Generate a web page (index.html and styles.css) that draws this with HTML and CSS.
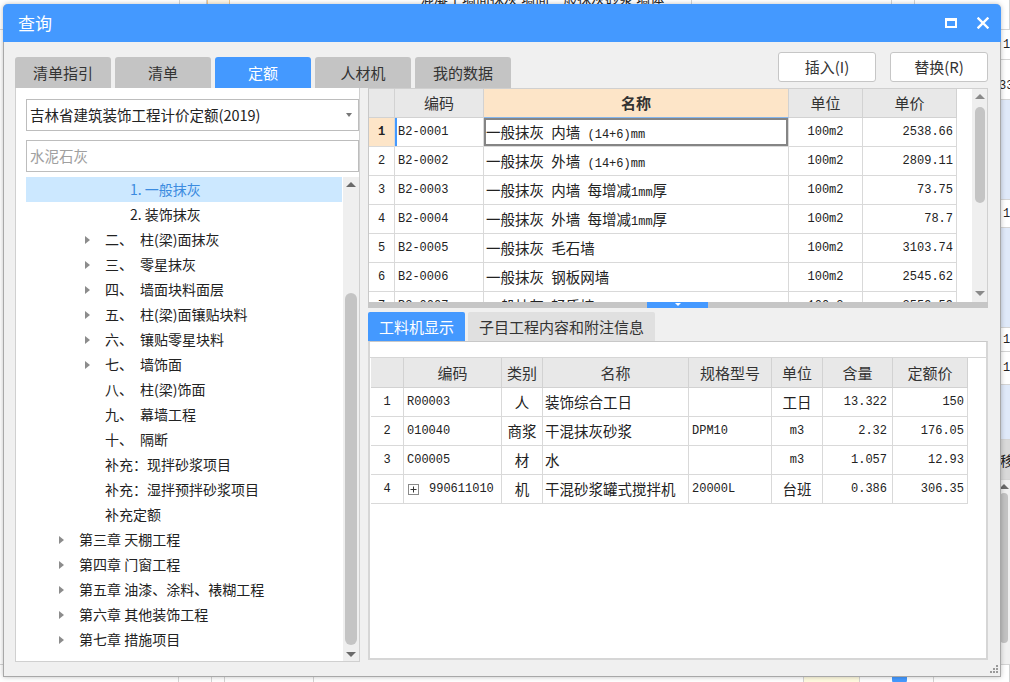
FILE: index.html
```html
<!DOCTYPE html>
<html lang="zh-CN">
<head>
<meta charset="utf-8">
<title>查询</title>
<link rel="stylesheet" href="styles.css">
</head>
<body>
<div class="app">
  <div class="app-top">
    <div class="ac"></div>
    <div class="ac"></div>
    <div class="ac ac-y"></div>
    <div class="ac"><span class="ac-txt">混凝土墙面抹灰 墙面一般抹灰砂浆 墙体</span></div>
    <div class="ac"></div>
    <div class="ac"></div>
    <div class="ac"></div>
  </div>
  <div class="app-mid"></div>
  <div class="app-right">
    <div class="ar ar-a">1</div>
    <div class="ar ar-b">33</div>
    <div class="ar ar-c ar-blue"></div>
    <div class="ar ar-d">1</div>
    <div class="ar ar-e ar-blue"></div>
    <div class="ar ar-f">1</div>
    <div class="ar ar-g">1</div>
    <div class="ar ar-h ar-blue"></div>
    <div class="ar ar-i">移</div>
    <div class="ar-sb"><span class="up-arrow dk"></span><span class="ar-thumb"></span></div>
  </div>
  <div class="app-bottom">
    <div class="ab"></div>
    <div class="ab"></div>
    <div class="ab"></div>
    <div class="ab"></div>
    <div class="ab"></div>
    <div class="ab ab-y"></div>
    <div class="ab"><span class="ab-blue"></span></div>
    <div class="ab"></div>
  </div>
</div>

<div class="dialog">
  <div class="titlebar">
    <span class="title">查询</span>
    <span class="ico-max"></span>
    <svg class="ico-close" width="12" height="12" viewBox="0 0 12 12"><path d="M1.5 1.5L10.5 10.5M10.5 1.5L1.5 10.5" stroke="#fff" stroke-width="2.4" stroke-linecap="square"/></svg>
  </div>

  <div class="toolbar">
    <div class="tabs">
      <div class="tab">清单指引</div>
      <div class="tab">清单</div>
      <div class="tab active">定额</div>
      <div class="tab">人材机</div>
      <div class="tab">我的数据</div>
    </div>
    <div class="actions">
      <div class="btn">插入(I)</div>
      <div class="btn">替换(R)</div>
    </div>
  </div>

  <div class="main">
    <div class="left">
      <div class="select"><span class="select-text">吉林省建筑装饰工程计价定额(2019)</span><span class="caret-down"></span></div>
      <div class="search">水泥石灰</div>
      <div class="tree">
        <div class="tree-list">
          <div class="node l3 sel">1. 一般抹灰</div>
          <div class="node l3">2. 装饰抹灰</div>
          <div class="node l2"><span class="tg"><i></i></span><span class="n">二、</span>柱(梁)面抹灰</div>
          <div class="node l2"><span class="tg"><i></i></span><span class="n">三、</span>零星抹灰</div>
          <div class="node l2"><span class="tg"><i></i></span><span class="n">四、</span>墙面块料面层</div>
          <div class="node l2"><span class="tg"><i></i></span><span class="n">五、</span>柱(梁)面镶贴块料</div>
          <div class="node l2"><span class="tg"><i></i></span><span class="n">六、</span>镶贴零星块料</div>
          <div class="node l2"><span class="tg"><i></i></span><span class="n">七、</span>墙饰面</div>
          <div class="node l2 leaf"><span class="n">八、</span>柱(梁)饰面</div>
          <div class="node l2 leaf"><span class="n">九、</span>幕墙工程</div>
          <div class="node l2 leaf"><span class="n">十、</span>隔断</div>
          <div class="node l2 leaf">补充：现拌砂浆项目</div>
          <div class="node l2 leaf">补充：湿拌预拌砂浆项目</div>
          <div class="node l2 leaf">补充定额</div>
          <div class="node l1"><span class="tg"><i></i></span>第三章 天棚工程</div>
          <div class="node l1"><span class="tg"><i></i></span>第四章 门窗工程</div>
          <div class="node l1"><span class="tg"><i></i></span>第五章 油漆、涂料、裱糊工程</div>
          <div class="node l1"><span class="tg"><i></i></span>第六章 其他装饰工程</div>
          <div class="node l1"><span class="tg"><i></i></span>第七章 措施项目</div>
        </div>
        <div class="vsb tree-sb">
          <div class="sb-btn"><span class="up-arrow dk"></span></div>
          <div class="sb-track"><span class="thumb tree-thumb"></span></div>
          <div class="sb-btn"><span class="down-arrow dk"></span></div>
        </div>
      </div>
    </div>

    <div class="right">
      <div class="upper">
        <div class="grid g1">
          <div class="row hd">
            <div class="cell"></div>
            <div class="cell">编码</div>
            <div class="cell hsel">名称</div>
            <div class="cell">单位</div>
            <div class="cell">单价</div>
          </div>
          <div class="row">
            <div class="cell c rn1">1</div>
            <div class="cell l focus">B2-0001</div>
            <div class="cell cj edit">一般抹灰&ensp;内墙&ensp;<span class="a">(14+6)mm</span></div>
            <div class="cell c">100m2</div>
            <div class="cell r">2538.66</div>
          </div>
          <div class="row">
            <div class="cell c">2</div>
            <div class="cell l">B2-0002</div>
            <div class="cell cj">一般抹灰&ensp;外墙&ensp;<span class="a">(14+6)mm</span></div>
            <div class="cell c">100m2</div>
            <div class="cell r">2809.11</div>
          </div>
          <div class="row">
            <div class="cell c">3</div>
            <div class="cell l">B2-0003</div>
            <div class="cell cj">一般抹灰&ensp;内墙&ensp;每增减<span class="a">1mm</span>厚</div>
            <div class="cell c">100m2</div>
            <div class="cell r">73.75</div>
          </div>
          <div class="row">
            <div class="cell c">4</div>
            <div class="cell l">B2-0004</div>
            <div class="cell cj">一般抹灰&ensp;外墙&ensp;每增减<span class="a">1mm</span>厚</div>
            <div class="cell c">100m2</div>
            <div class="cell r">78.7</div>
          </div>
          <div class="row">
            <div class="cell c">5</div>
            <div class="cell l">B2-0005</div>
            <div class="cell cj">一般抹灰&ensp;毛石墙</div>
            <div class="cell c">100m2</div>
            <div class="cell r">3103.74</div>
          </div>
          <div class="row">
            <div class="cell c">6</div>
            <div class="cell l">B2-0006</div>
            <div class="cell cj">一般抹灰&ensp;钢板网墙</div>
            <div class="cell c">100m2</div>
            <div class="cell r">2545.62</div>
          </div>
          <div class="row">
            <div class="cell c">7</div>
            <div class="cell l">B2-0007</div>
            <div class="cell cj">一般抹灰&ensp;轻质墙</div>
            <div class="cell c">100m2</div>
            <div class="cell r">2559.59</div>
          </div>
        </div>
        <div class="filler"></div>
        <div class="vsb up-sb">
          <div class="sb-btn"><span class="up-arrow"></span></div>
          <span class="thumb up-thumb"></span>
          <div class="sb-btn sb-end"><span class="down-arrow"></span></div>
        </div>
      </div>

      <div class="splitter"><span class="split-handle"><span class="split-tri"></span></span></div>

      <div class="ltabs">
        <div class="ltab active">工料机显示</div>
        <div class="ltab wide">子目工程内容和附注信息</div>
      </div>

      <div class="lower">
        <div class="strip"></div>
        <div class="grid g2">
          <div class="row hd">
            <div class="cell"></div>
            <div class="cell">编码</div>
            <div class="cell">类别</div>
            <div class="cell">名称</div>
            <div class="cell">规格型号</div>
            <div class="cell">单位</div>
            <div class="cell">含量</div>
            <div class="cell">定额价</div>
          </div>
          <div class="row">
            <div class="cell c">1</div>
            <div class="cell l">R00003</div>
            <div class="cell cj c">人</div>
            <div class="cell cj l2p">装饰综合工日</div>
            <div class="cell l"></div>
            <div class="cell cj c">工日</div>
            <div class="cell r r5">13.322</div>
            <div class="cell r">150</div>
          </div>
          <div class="row">
            <div class="cell c">2</div>
            <div class="cell l">010040</div>
            <div class="cell cj c">商浆</div>
            <div class="cell cj l2p">干混抹灰砂浆</div>
            <div class="cell l">DPM10</div>
            <div class="cell c">m3</div>
            <div class="cell r r5">2.32</div>
            <div class="cell r">176.05</div>
          </div>
          <div class="row">
            <div class="cell c">3</div>
            <div class="cell l">C00005</div>
            <div class="cell cj c">材</div>
            <div class="cell cj l2p">水</div>
            <div class="cell l"></div>
            <div class="cell c">m3</div>
            <div class="cell r r5">1.057</div>
            <div class="cell r">12.93</div>
          </div>
          <div class="row">
            <div class="cell c">4</div>
            <div class="cell l code-exp"><svg class="plus" width="11" height="11" viewBox="0 0 11 11"><rect x="0.5" y="0.5" width="10" height="10" fill="#fff" stroke="#8a8a8a"/><path d="M2.5 5.5h6M5.5 2.5v6" stroke="#333" stroke-width="1"/></svg>990611010</div>
            <div class="cell cj c">机</div>
            <div class="cell cj l2p">干混砂浆罐式搅拌机</div>
            <div class="cell l">20000L</div>
            <div class="cell cj c">台班</div>
            <div class="cell r r5">0.386</div>
            <div class="cell r">306.35</div>
          </div>
        </div>
      </div>
    </div>
  </div>

  <div class="footer">
    <svg class="grip" width="8" height="8" viewBox="0 0 8 8" fill="#9a9a9a"><rect x="6" y="0" width="2" height="2"/><rect x="3" y="3" width="2" height="2"/><rect x="6" y="3" width="2" height="2"/><rect x="0" y="6" width="2" height="2"/><rect x="3" y="6" width="2" height="2"/><rect x="6" y="6" width="2" height="2"/></svg>
  </div>
</div>
</body>
</html>
```

FILE: styles.css
```css
* { box-sizing: border-box; margin: 0; padding: 0; }

body {
  width: 1010px;
  height: 682px;
  overflow: hidden;
  position: relative;
  background: #fff;
  font-family: "Noto Sans CJK SC", "Noto Sans", sans-serif;
  font-size: 14px;
  color: #333;
}

/* ---------- background application ---------- */
.app {
  width: 1010px;
  height: 682px;
  display: grid;
  grid-template-columns: 1fr 14px;
  grid-template-rows: 30px 1fr 18px;
}
.app-top {
  grid-column: 1 / -1;
  display: grid;
  grid-template-columns: 180px 27px 23px 462px 200px 23px 1fr;
  border-bottom: 1px solid #d4d4d4;
}
.ac { border-right: 1px solid #d4d4d4; overflow: hidden; }
.ac-y { background: #fff7e6; border-left: 1px solid #f0c890; border-right-color: #f0c890; }
.ac-txt {
  display: block;
  margin-top: -10px;
  padding-left: 190px;
  line-height: 16px;
  font-size: 14px;
  color: #222;
  white-space: nowrap;
}
.app-mid { grid-column: 1; grid-row: 2; }
.app-right {
  grid-column: 2;
  grid-row: 2;
  display: flex;
  flex-direction: column;
  border-left: 1px solid #d4d4d4;
  font-family: "Liberation Mono", monospace;
  font-size: 12px;
  color: #222;
}
.ar { padding-left: 6px; border-bottom: 1px solid #d4d4d4; display: flex; align-items: center; white-space: nowrap; overflow: hidden; }
.ar-a { height: 30px; }
.ar-b { height: 40px; align-items: flex-end; padding-bottom: 6px; padding-left: 2px; }
.ar-c { height: 100px; }
.ar-d { height: 28px; }
.ar-e { height: 100px; }
.ar-f { height: 24px; }
.ar-g { height: 33px; }
.ar-h { height: 55px; }
.ar-i { height: 40px; background: #d9d9d9; font-family: "Noto Sans CJK SC", sans-serif; font-size: 14px; padding-left: 3px; }
.ar-blue { background: #dfe9f9; }
.ar-sb {
  flex: 1;
  background: #f0f0f0;
  display: flex;
  flex-direction: column;
  align-items: center;
  padding-top: 4px;
  gap: 4px;
}
.ar-thumb { width: 8px; height: 150px; border-radius: 4px; background: #c2c2c2; }
.app-bottom {
  grid-column: 1 / -1;
  grid-row: 3;
  display: grid;
  grid-template-columns: 179px 13px 26px 96px 490px 56px 74px 1fr;
  border-top: 1px solid #d4d4d4;
}
.ab { border-right: 1px solid #d4d4d4; padding-left: 32px; }
.ab-y { background: #fffbe0; }
.ab-blue { display: block; width: 15px; height: 18px; background: #4499ff; border-radius: 3px; }

/* ---------- dialog window ---------- */
.dialog {
  position: absolute;
  left: 3px;
  top: 4px;
  width: 998px;
  height: 673px;
  background: #f0f0f0;
  border: 1px solid #a8a8a8;
  border-top: 0;
  border-radius: 5px 5px 0 0;
  box-shadow: 0 0 5px rgba(0, 0, 0, 0.25);
  display: flex;
  flex-direction: column;
}

.titlebar {
  height: 38px;
  margin: 0 -1px;
  background: #4499ff;
  border-radius: 5px 5px 0 0;
  display: flex;
  align-items: center;
  padding: 0 12px 0 15px;
  color: #fff;
}
.title { flex: 1; font-size: 17px; line-height: 22px; }
.ico-max {
  width: 12px;
  height: 10px;
  border: 2px solid #fff;
  border-top-width: 3px;
  margin-right: 20px;
}
.ico-close { display: block; }

.toolbar {
  height: 36px;
  margin-top: 10px;
  display: flex;
  padding: 0 12px 0 11px;
}
.tabs { display: flex; gap: 4px; align-self: flex-end; }
.tab {
  width: 96px;
  height: 31px;
  line-height: 31px;
  text-align: center;
  font-size: 15px;
  background: #c4c4c4;
  border-radius: 3px 3px 0 0;
  color: #333;
}
.tab.active { background: #4499ff; color: #fff; }
.actions { margin-left: auto; display: flex; gap: 14px; align-self: flex-start; }
.btn {
  width: 98px;
  height: 30px;
  line-height: 28px;
  text-align: center;
  font-size: 15px;
  background: #fff;
  border: 1px solid #c6c6c6;
  border-radius: 3px;
  color: #333;
}

.main {
  height: 574px;
  display: flex;
  gap: 8px;
  padding: 0 12px 0 11px;
}

/* ---------- left panel ---------- */
.left {
  width: 345px;
  background: #fff;
  border: 1px solid #d0d0d0;
  border-top: 0;
  padding: 11px 0 0 10px;
  display: flex;
  flex-direction: column;
}
.select {
  height: 32px;
  border: 1px solid #bdbdbd;
  display: flex;
  align-items: center;
  padding: 0 6px 0 3px;
}
.select-text { flex: 1; font-size: 14.5px; line-height: 20px; color: #222; }
.caret-down {
  width: 0; height: 0;
  border-left: 3.5px solid transparent;
  border-right: 3.5px solid transparent;
  border-top: 4px solid #777;
}
.search {
  height: 32px;
  margin-top: 9px;
  border: 1px solid #bdbdbd;
  padding-left: 3px;
  line-height: 30px;
  font-size: 14.5px;
  color: #a0a0a0;
}
.tree {
  flex: 1;
  margin-top: 5px;
  display: flex;
  gap: 1px;
  overflow: hidden;
}
.tree-list { width: 316px; }
.node {
  height: 25px;
  line-height: 25px;
  font-size: 14px;
  color: #222;
  white-space: nowrap;
  display: flex;
  align-items: center;
}
.node.sel { background: #cce8ff; color: #3b8be0; }
.l3 { padding-left: 104px; }
.l2 { padding-left: 59px; }
.l2.leaf { padding-left: 79px; }
.l1 { padding-left: 33px; }
.tg { width: 20px; display: inline-flex; align-items: center; }
.tg i {
  display: block;
  width: 0; height: 0;
  border-top: 4px solid transparent;
  border-bottom: 4px solid transparent;
  border-left: 5px solid #8c8c8c;
}
.n { display: inline-block; width: 35px; }

/* ---------- scrollbars ---------- */
.vsb {
  background: #efefef;
  display: flex;
  flex-direction: column;
  align-items: center;
}
.tree-sb { width: 16px; }
.sb-btn { height: 14px; width: 100%; display: flex; align-items: center; justify-content: center; }
.sb-track { flex: 1; padding-top: 102px; display: flex; flex-direction: column; align-items: center; }
.thumb { display: block; background: #c4c4c4; border-radius: 6px; }
.tree-thumb { width: 12px; height: 352px; }
.up-arrow {
  display: block; width: 0; height: 0;
  border-left: 5px solid transparent;
  border-right: 5px solid transparent;
  border-bottom: 5px solid #8a8a8a;
}
.down-arrow {
  display: block; width: 0; height: 0;
  border-left: 5px solid transparent;
  border-right: 5px solid transparent;
  border-top: 5px solid #8a8a8a;
}
.up-arrow.dk { border-bottom-color: #6a6a6a; }
.down-arrow.dk { border-top-color: #6a6a6a; }

/* ---------- right panel ---------- */
.right { width: 620px; display: flex; flex-direction: column; }

.upper {
  height: 214px;
  display: flex;
  background: #fff;
  border-top: 1px solid #d0d0d0;
  border-left: 1px solid #c8c8c8;
  border-right: 1px solid #d0d0d0;
}
.g1 { width: 588px; overflow: hidden; }
.filler { width: 15px; background: #fff; }
.up-sb { width: 15px; }
.up-thumb { width: 10px; height: 96px; margin-top: 4px; border-radius: 5px; }
.sb-end { margin-top: auto; margin-bottom: 2px; }

.row { display: grid; height: 29px; }
.g1 .row { grid-template-columns: 26px 89px 305px 74px 94px; }
.g2 .row { grid-template-columns: 33px 98px 41px 146px 83px 51px 70px 75px; }
.cell {
  border-right: 1px solid #d9d9d9;
  border-bottom: 1px solid #d9d9d9;
  line-height: 28px;
  white-space: nowrap;
  overflow: hidden;
  font-family: "Liberation Mono", monospace;
  font-size: 12px;
  color: #222;
  background: #fff;
}
.hd .cell {
  background: #e8e8e8;
  font-family: "Noto Sans CJK SC", sans-serif;
  font-size: 15px;
  text-align: center;
  color: #333;
  border-color: #d2d2d2;
}
.hd .cell.hsel { background: #fde5c8; font-weight: bold; border-bottom-color: #86b6ec; }
.g2 .row.hd { height: 30px; }
.g2 .hd .cell { line-height: 29px; }

.cj { font-family: "Noto Sans CJK SC", sans-serif; font-size: 14.5px; padding-left: 2px; }
.cj .a { font-family: "Liberation Mono", monospace; font-size: 12px; }
.c { text-align: center; padding-left: 0; }
.l { padding-left: 3px; }
.l2p { padding-left: 2px; }
.r { text-align: right; padding-right: 3px; }
.r5 { padding-right: 5px; }
.rn1 { background: #fde5c8; font-weight: bold; }
.focus { box-shadow: inset 2px 0 0 #4499ff; }
.edit { box-shadow: inset 0 0 0 2px #858585; }

.code-exp { display: flex; align-items: center; }
.plus { display: block; margin: 0 10px 0 1px; }

.splitter {
  height: 6px;
  background: #c6c6c6;
  display: flex;
}
.split-handle {
  margin-left: 279px;
  width: 61px;
  height: 6px;
  background: #4499ff;
  display: flex;
  justify-content: center;
  padding-top: 1px;
}
.split-tri {
  display: block; width: 0; height: 0;
  border-left: 3px solid transparent;
  border-right: 3px solid transparent;
  border-top: 3px solid #fff;
}

.ltabs { display: flex; gap: 3px; height: 29px; margin-top: 4px; }
.ltab {
  width: 97px;
  text-align: center;
  line-height: 29px;
  font-size: 15px;
  background: #e0e0e0;
  color: #333;
  border-radius: 2px 2px 0 0;
}
.ltab.active { background: #4499ff; color: #fff; }
.ltab.wide { width: 187px; }

.lower {
  flex: 1;
  margin-bottom: 2px;
  background: #fff;
  border: 2px solid #d6d6d6;
  border-top: 1px solid #c8c8c8;
  display: flex;
  flex-direction: column;
}
.strip { height: 16px; border-bottom: 1px solid #d6d6d6; flex-shrink: 0; }
.g2 { margin-left: 1px; width: 597px; }

.footer {
  flex: 1;
  display: flex;
  justify-content: flex-end;
  align-items: center;
  padding-right: 2px;
}
.grip { display: block; }
```
